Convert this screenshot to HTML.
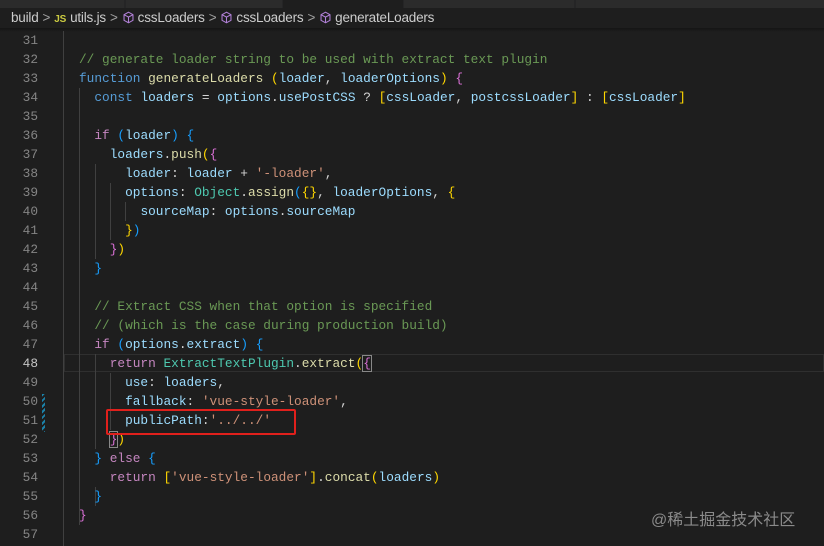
<!DOCTYPE html>
<html><head><meta charset="utf-8"><style>
html,body{margin:0;padding:0;width:824px;height:546px;overflow:hidden;background:#1e1e1e;}
.tabs{position:absolute;left:0;top:0;width:824px;height:8px;background:#252526;}
.crumb{position:absolute;left:11px;top:8px;height:20px;line-height:20px;font-family:"Liberation Sans",sans-serif;font-size:13.5px;color:#cccccc;white-space:nowrap;letter-spacing:-0.2px}
.crumb .sep{color:#a0a0a0;margin:0 4px}
.crumb .js{color:#cbcb41;font-weight:bold;font-size:10px;margin-right:4px}
.crumb .cube{display:inline-block;width:13px;height:13px;vertical-align:-2px;margin-right:3px}
.code{position:absolute;left:0;top:31px;font-family:"Liberation Mono",monospace;font-size:12.8px;}
.ln{position:absolute;left:0;width:38px;text-align:right;color:#858585;height:19px;line-height:19px}
.ln.cur{color:#c6c6c6}
.tx{position:absolute;left:79px;white-space:pre;color:#d4d4d4;height:19px;line-height:19px}
.c{color:#6a9955}.k{color:#569cd6}.f{color:#dcdcaa}.v{color:#9cdcfe}.p{color:#c586c0}.s{color:#ce9178}.cl{color:#4ec9b0}
.b1{color:#ffd700}.b2{color:#da70d6}.b3{color:#179fff}
.guide{position:absolute;width:1px;background:#404040}
</style></head><body>
<div class="tabs">
<div style="position:absolute;left:0;top:0;width:124px;height:8px;background:#2b2b2b"></div>
<div style="position:absolute;left:126px;top:0;width:156px;height:8px;background:#2b2b2b"></div>
<div style="position:absolute;left:283px;top:0;width:120px;height:8px;background:#1e1e1e"></div>
<div style="position:absolute;left:404px;top:0;width:170px;height:8px;background:#2b2b2b"></div>
<div style="position:absolute;left:576px;top:0;width:248px;height:8px;background:#2b2b2b"></div>
</div>
<div class="crumb">build<span class="sep">&gt;</span><span class="js">JS</span>utils.js<span class="sep">&gt;</span><svg class="cube" viewBox="0 0 16 16"><path d="M8 1.5l5.5 3v7L8 14.5 2.5 11.5v-7z M2.5 4.5L8 7.5l5.5-3 M8 7.5v7" fill="none" stroke="#b180d7" stroke-width="1.3"/></svg>cssLoaders<span class="sep">&gt;</span><svg class="cube" viewBox="0 0 16 16"><path d="M8 1.5l5.5 3v7L8 14.5 2.5 11.5v-7z M2.5 4.5L8 7.5l5.5-3 M8 7.5v7" fill="none" stroke="#b180d7" stroke-width="1.3"/></svg>cssLoaders<span class="sep">&gt;</span><svg class="cube" viewBox="0 0 16 16"><path d="M8 1.5l5.5 3v7L8 14.5 2.5 11.5v-7z M2.5 4.5L8 7.5l5.5-3 M8 7.5v7" fill="none" stroke="#b180d7" stroke-width="1.3"/></svg>generateLoaders</div>
<div style="position:absolute;left:0;top:28px;width:824px;height:4px;background:linear-gradient(#151515,#1e1e1e)"></div>
<div style="position:absolute;left:64px;top:354px;width:760px;height:18px;border:1px solid #2f2f2f;box-sizing:border-box"></div>
<div class="guide" style="left:63px;top:31px;height:515px"></div>
<div class="guide" style="left:79px;top:88px;height:437px"></div>
<div class="guide" style="left:95px;top:164px;height:95px"></div>
<div class="guide" style="left:110px;top:183px;height:57px"></div>
<div class="guide" style="left:125px;top:202px;height:19px"></div>
<div class="guide" style="left:95px;top:354px;height:95px"></div>
<div class="guide" style="left:110px;top:373px;height:57px"></div>
<div class="guide" style="left:95px;top:487px;height:19px"></div>
<div style="position:absolute;left:42px;top:394px;width:3px;height:38px;background:repeating-linear-gradient(135deg,#1b81a8 0 2px,#1e1e1e 2px 4px)"></div>
<div class="code" id="code"></div>
<div style="position:absolute;left:106px;top:409px;width:190px;height:26px;border:2px solid #e0201c;border-radius:2px;box-sizing:border-box"></div>
<div style="position:absolute;left:651px;top:506px;font-family:'Liberation Sans','Noto Sans CJK SC',sans-serif;font-size:16px;color:#8a8a8a;white-space:nowrap">@稀土掘金技术社区</div>
<script>
var L=[
'',
'<span class="c">// generate loader string to be used with extract text plugin</span>',
'<span class="k">function</span> <span class="f">generateLoaders</span> <span class="b1">(</span><span class="v">loader</span>, <span class="v">loaderOptions</span><span class="b1">)</span> <span class="b2">{</span>',
'  <span class="k">const</span> <span class="v">loaders</span> = <span class="v">options</span>.<span class="v">usePostCSS</span> ? <span class="b1">[</span><span class="v">cssLoader</span>, <span class="v">postcssLoader</span><span class="b1">]</span> : <span class="b1">[</span><span class="v">cssLoader</span><span class="b1">]</span>',
'',
'  <span class="p">if</span> <span class="b3">(</span><span class="v">loader</span><span class="b3">)</span> <span class="b3">{</span>',
'    <span class="v">loaders</span>.<span class="f">push</span><span class="b1">(</span><span class="b2">{</span>',
'      <span class="v">loader</span>: <span class="v">loader</span> + <span class="s">\'-loader\'</span>,',
'      <span class="v">options</span>: <span class="cl">Object</span>.<span class="f">assign</span><span class="b3">(</span><span class="b1">{}</span>, <span class="v">loaderOptions</span>, <span class="b1">{</span>',
'        <span class="v">sourceMap</span>: <span class="v">options</span>.<span class="v">sourceMap</span>',
'      <span class="b1">}</span><span class="b3">)</span>',
'    <span class="b2">}</span><span class="b1">)</span>',
'  <span class="b3">}</span>',
'',
'  <span class="c">// Extract CSS when that option is specified</span>',
'  <span class="c">// (which is the case during production build)</span>',
'  <span class="p">if</span> <span class="b3">(</span><span class="v">options</span>.<span class="v">extract</span><span class="b3">)</span> <span class="b3">{</span>',
'    <span class="p">return</span> <span class="cl">ExtractTextPlugin</span>.<span class="f">extract</span><span class="b1">(</span><span class="b2" style="outline:1px solid #888">{</span>',
'      <span class="v">use</span>: <span class="v">loaders</span>,',
'      <span class="v">fallback</span>: <span class="s">\'vue-style-loader\'</span>,',
'      <span class="v">publicPath</span>:<span class="s">\'../../\'</span>',
'    <span class="b2" style="outline:1px solid #888">}</span><span class="b1">)</span>',
'  <span class="b3">}</span> <span class="p">else</span> <span class="b3">{</span>',
'    <span class="p">return</span> <span class="b1">[</span><span class="s">\'vue-style-loader\'</span><span class="b1">]</span>.<span class="f">concat</span><span class="b1">(</span><span class="v">loaders</span><span class="b1">)</span>',
'  <span class="b3">}</span>',
'<span class="b2">}</span>',
''];
var h='';for(var i=0;i<L.length;i++){var y=i*19;h+='<div class="ln'+(i==17?' cur':'')+'" style="top:'+y+'px">'+(31+i)+'</div><div class="tx" style="top:'+y+'px">'+L[i]+'</div>';}
document.getElementById('code').innerHTML=h;
</script>
</body></html>
